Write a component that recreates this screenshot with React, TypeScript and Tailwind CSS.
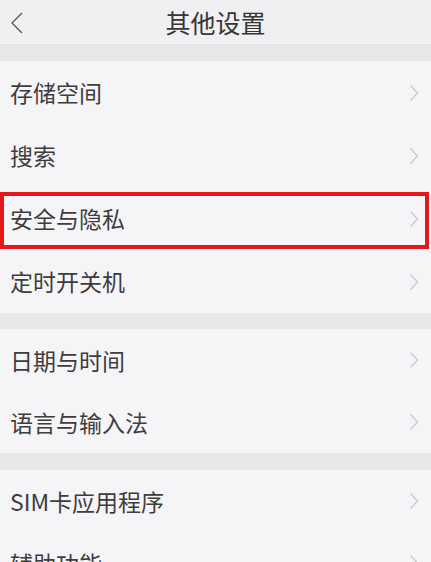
import React from "react";

const groups: { items: string[]; h: string }[] = [
  { items: ["存储空间", "搜索", "安全与隐私", "定时开关机"], h: "h-[63px]" },
  { items: ["日期与时间", "语言与输入法"], h: "h-[62px]" },
  { items: ["SIM卡应用程序", "辅助功能"], h: "h-[62px]" },
];

const font = { fontFamily: '"Noto Sans CJK SC", "Noto Sans", sans-serif' };

const Chevron = () => (
  <svg width="10" height="18" viewBox="0 0 10 18" fill="none">
    <path d="M1.5 1.5 L8.5 9 L1.5 16.5" stroke="#c9c8cc" strokeWidth="1.3" />
  </svg>
);

export default function App() {
  return (
    <div className="w-[431px] h-[562px] overflow-hidden bg-[#e8e7ea]" style={font}>
      {/* Header */}
      <div className="relative h-[45px] bg-[#f0eff1] border-b border-[#e3e2e5] flex items-center justify-center">
        <svg className="absolute left-[9px] top-[11px]" width="16" height="24" viewBox="0 0 16 24" fill="none">
          <path d="M13 2 L3 12 L13 22" stroke="#5a5a5c" strokeWidth="1.4" />
        </svg>
        <span className="text-[25px] text-[#363636] leading-none">其他设置</span>
      </div>

      {groups.map((g, gi) => (
        <div key={gi} className={gi === 2 ? "mt-[17px]" : "mt-[16px]"}>
          {g.items.map((item) => (
            <div
              key={item}
              className={`relative ${g.h} bg-[#f5f4f7] flex items-center justify-between pl-[10px] pr-[12px]`}
            >
              <span className="text-[23px] text-[#3d3d3d] leading-none">{item}</span>
              <Chevron />
              {item === "安全与隐私" && (
                <div className="absolute left-0 right-[2px] top-[5px] bottom-[1px] border-[4px] border-[#e5161c]" />
              )}
            </div>
          ))}
        </div>
      ))}
    </div>
  );
}
